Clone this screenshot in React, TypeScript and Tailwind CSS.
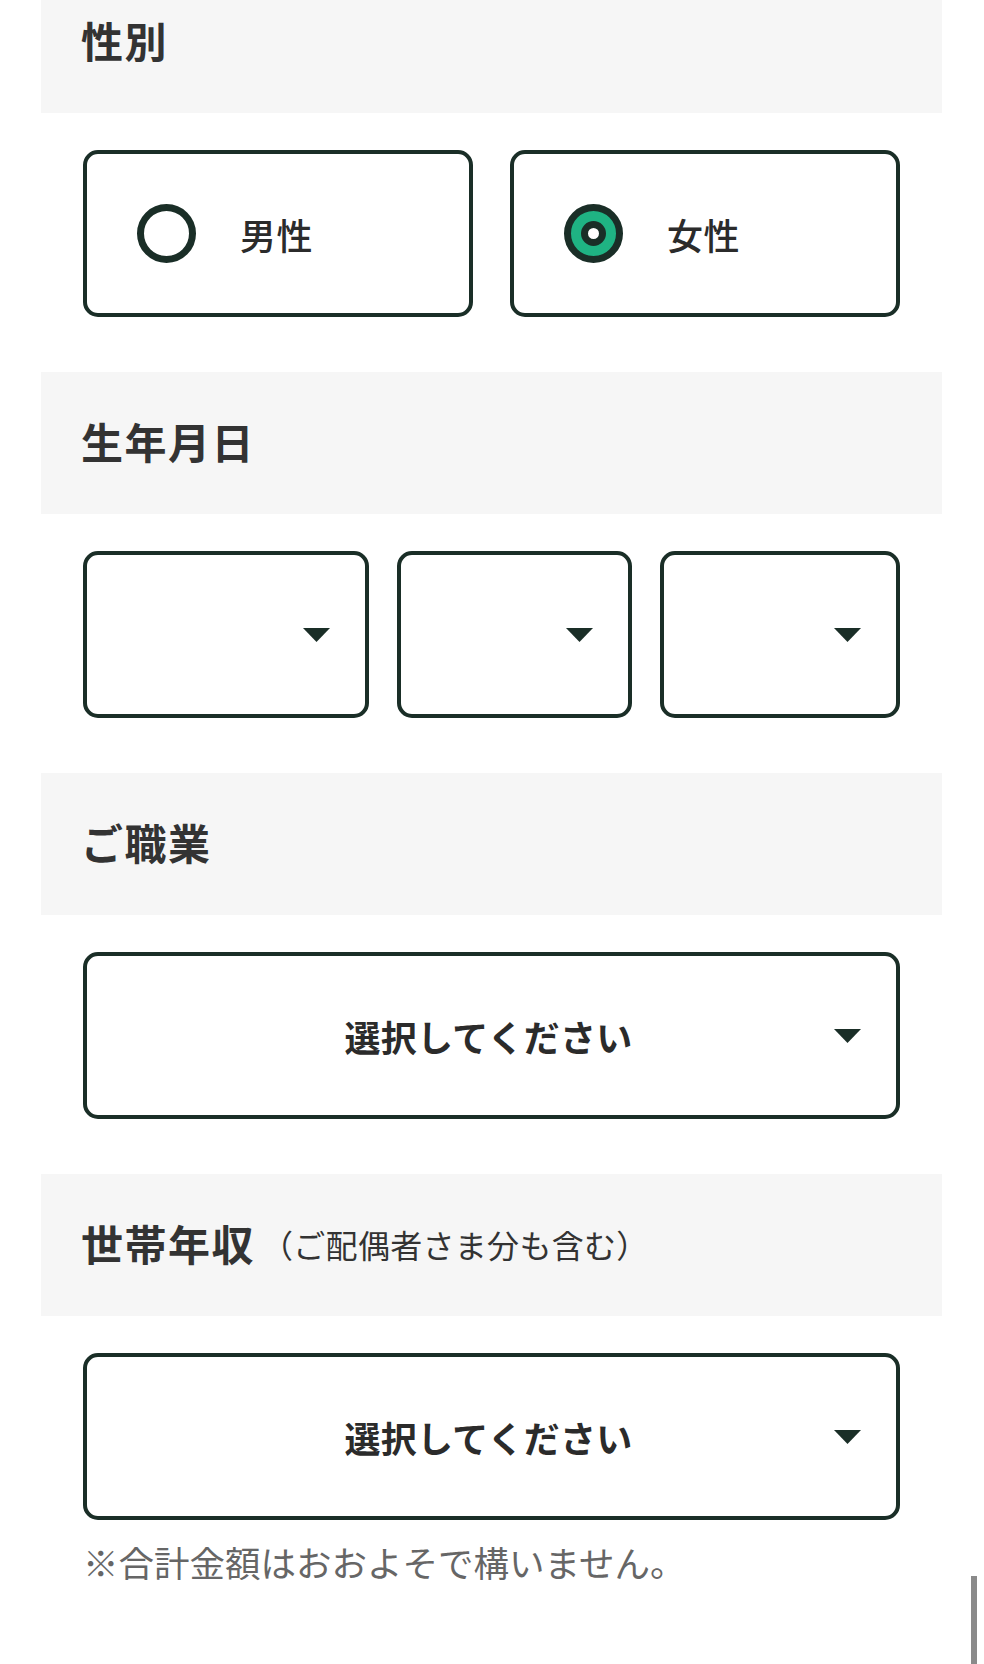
import React from "react";

const font = { fontFamily: '"Noto Sans CJK JP", "Noto Sans", sans-serif' };

function Header({ children }: { children: React.ReactNode }) {
  return (
    <div className="mx-[41px] w-[901px] h-[142px] bg-[#f6f6f6] flex items-center pl-[40px] pb-[5px]">
      {children}
    </div>
  );
}

function Triangle() {
  return (
    <svg width="27" height="14" viewBox="0 0 27 14" className="block">
      <polygon points="0,0 27,0 13.5,14" fill="#1a2e27" />
    </svg>
  );
}

function SmallSelect({ w }: { w: string }) {
  return (
    <div className={`${w} h-[167px] rounded-[15px] border-[4px] border-[#1a2e27] bg-white flex items-center justify-end pr-[35px]`}>
      <Triangle />
    </div>
  );
}

function BigSelect() {
  return (
    <div className="relative w-full h-[167px] rounded-[15px] border-[4px] border-[#1a2e27] bg-white flex items-center justify-center">
      <span className="text-[36px] font-bold text-[#2b2b2b] leading-none pr-[6px] tracking-[0.3px]">選択してください</span>
      <div className="absolute right-[35px] top-1/2 -translate-y-1/2">
        <Triangle />
      </div>
    </div>
  );
}

function Radio({ label, checked }: { label: string; checked?: boolean }) {
  return (
    <div className="w-[390px] h-[167px] rounded-[15px] border-[4px] border-[#1a2e27] bg-white flex items-center pl-[50px]">
      {checked ? (
        <div className="w-[59px] h-[59px] rounded-full border-[7px] border-[#1a2e27] bg-[#1fb383] flex items-center justify-center">
          <div className="w-[25px] h-[25px] rounded-full border-[7px] border-[#1a2e27] bg-white" />
        </div>
      ) : (
        <div className="w-[59px] h-[59px] rounded-full border-[7px] border-[#1a2e27] bg-white" />
      )}
      <span className="ml-[44px] text-[36px] font-medium text-[#2b2b2b] tracking-[0.5px] leading-none">{label}</span>
    </div>
  );
}

export default function App() {
  return (
    <div className="relative w-[984px] h-[1664px] overflow-hidden bg-white" style={font}>
      <div className="mt-[-29px]">
        <Header>
          <span className="text-[42px] font-bold text-[#333] tracking-[1.5px] leading-none">性別</span>
        </Header>
        <div className="pl-[83px] pr-[84px] pt-[37px] pb-[55px] flex gap-[37px]">
          <Radio label="男性" />
          <Radio label="女性" checked />
        </div>

        <Header>
          <span className="text-[42px] font-bold text-[#333] tracking-[1.5px] leading-none">生年月日</span>
        </Header>
        <div className="pl-[83px] pr-[84px] pt-[37px] pb-[55px] flex gap-[28px]">
          <SmallSelect w="w-[286px]" />
          <SmallSelect w="w-[235px]" />
          <SmallSelect w="w-[240px]" />
        </div>

        <Header>
          <span className="text-[42px] font-bold text-[#333] tracking-[1.5px] leading-none">ご職業</span>
        </Header>
        <div className="pl-[83px] pr-[84px] pt-[37px] pb-[55px]">
          <BigSelect />
        </div>

        <Header>
          <div className="flex items-center">
            <span className="text-[42px] font-bold text-[#333] tracking-[1.5px] leading-none">世帯年収</span>
            <span className="ml-[6px] text-[32px] text-[#333] leading-none pt-[2px] tracking-[0.3px]">（ご配偶者さま分も含む）</span>
          </div>
        </Header>
        <div className="pl-[83px] pr-[84px] pt-[37px]">
          <BigSelect />
          <p className="mt-[24px] text-[35.5px] text-[#666] leading-none">※合計金額はおおよそで構いません。</p>
        </div>
      </div>
      <div className="absolute right-[7px] bottom-0 w-[6px] h-[88px] bg-[#8a8a8a]" />
    </div>
  );
}
